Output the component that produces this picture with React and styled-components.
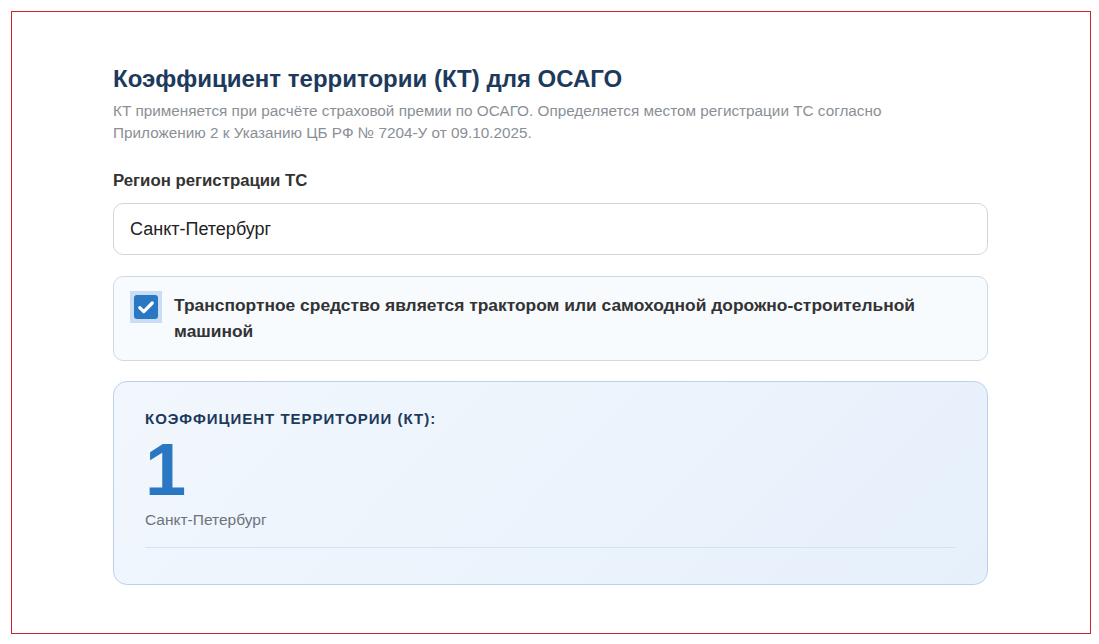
import React, { useState } from "react";
import styled, { createGlobalStyle } from "styled-components";

const Global = createGlobalStyle`
  body { margin: 0; font-family: "Liberation Sans", Arial, sans-serif; background: #fff; }
`;

const Frame = styled.div`
  margin: 11px 0 0 11px;
  width: 1080px;
  height: 623px;
  box-sizing: border-box;
  border: 1px solid #c8262c;
  padding: 52px 102px 0 101px;
`;

const Title = styled.h1`
  margin: 0;
  font-size: 24px;
  font-weight: bold;
  color: #1d3a5c;
  line-height: 30px;
`;

const Desc = styled.p`
  margin: 6px 0 0;
  font-size: 15.3px;
  line-height: 22px;
  color: #8a8f96;
  max-width: 830px;
`;

const Label = styled.div`
  margin-top: 26px;
  font-size: 16.8px;
  font-weight: bold;
  color: #333;
  line-height: 22px;
`;

const Input = styled.input`
  display: block;
  margin-top: 11px;
  width: 100%;
  height: 52px;
  box-sizing: border-box;
  border: 1px solid #cfd6de;
  border-radius: 10px;
  padding: 0 16px;
  font: 18px "Liberation Sans", Arial, sans-serif;
  color: #222;
  outline: none;
`;

const CheckRow = styled.label`
  display: flex;
  gap: 12px;
  margin-top: 21px;
  padding: 14px 16px 16px 16px;
  border: 1px solid #ccd9e6;
  border-radius: 10px;
  background: #f8fbfe;
  cursor: pointer;
`;

const Box = styled.span`
  flex: none;
  width: 32px;
  height: 32px;
  box-sizing: border-box;
  background: #c9def2;
  padding: 4px;
`;

const BoxInner = styled.span`
  display: flex;
  align-items: center;
  justify-content: center;
  width: 24px;
  height: 24px;
  border-radius: 3px;
  background: #2a78c4;
`;

const CheckText = styled.span`
  font-size: 17.4px;
  font-weight: bold;
  color: #333;
  line-height: 26px;
  margin-top: 1px;
`;

const Result = styled.div`
  margin-top: 20px;
  height: 204px;
  box-sizing: border-box;
  border: 1px solid #b9d2ea;
  border-radius: 14px;
  background: linear-gradient(135deg, #f2f7fd 0%, #e6f0fb 100%);
  padding: 28px 31px 0;
`;

const ResultLabel = styled.div`
  font-size: 15px;
  font-weight: bold;
  letter-spacing: 1px;
  color: #1d3a5c;
  text-transform: uppercase;
`;

const Value = styled.div`
  margin-top: 8px;
  font-size: 74px;
  font-weight: bold;
  line-height: 70px;
  color: #2a78c4;
`;

const City = styled.div`
  margin-top: 6px;
  font-size: 15.5px;
  color: #6c737b;
`;

const Divider = styled.div`
  margin-top: 18px;
  border-top: 1px solid #d6e3ef;
`;

export default function App() {
  const [checked, setChecked] = useState(true);
  return (
    <>
      <Global />
      <Frame>
        <Title>Коэффициент территории (КТ) для ОСАГО</Title>
        <Desc>
          КТ применяется при расчёте страховой премии по ОСАГО. Определяется местом регистрации ТС согласно
          Приложению 2 к Указанию ЦБ РФ № 7204-У от 09.10.2025.
        </Desc>
        <Label>Регион регистрации ТС</Label>
        <Input defaultValue="Санкт-Петербург" />
        <CheckRow onClick={() => setChecked(!checked)}>
          <Box>
            <BoxInner style={{ opacity: checked ? 1 : 0.2 }}>
              <svg width="20" height="20" viewBox="0 0 16 16">
                <path d="M3 8.5l3.2 3.2L13 4.8" fill="none" stroke="#fff" strokeWidth="2.6" strokeLinecap="round" strokeLinejoin="round" />
              </svg>
            </BoxInner>
          </Box>
          <CheckText>
            Транспортное средство является трактором или самоходной дорожно-строительной машиной
          </CheckText>
        </CheckRow>
        <Result>
          <ResultLabel>Коэффициент территории (КТ):</ResultLabel>
          <Value>1</Value>
          <City>Санкт-Петербург</City>
          <Divider />
        </Result>
      </Frame>
    </>
  );
}
